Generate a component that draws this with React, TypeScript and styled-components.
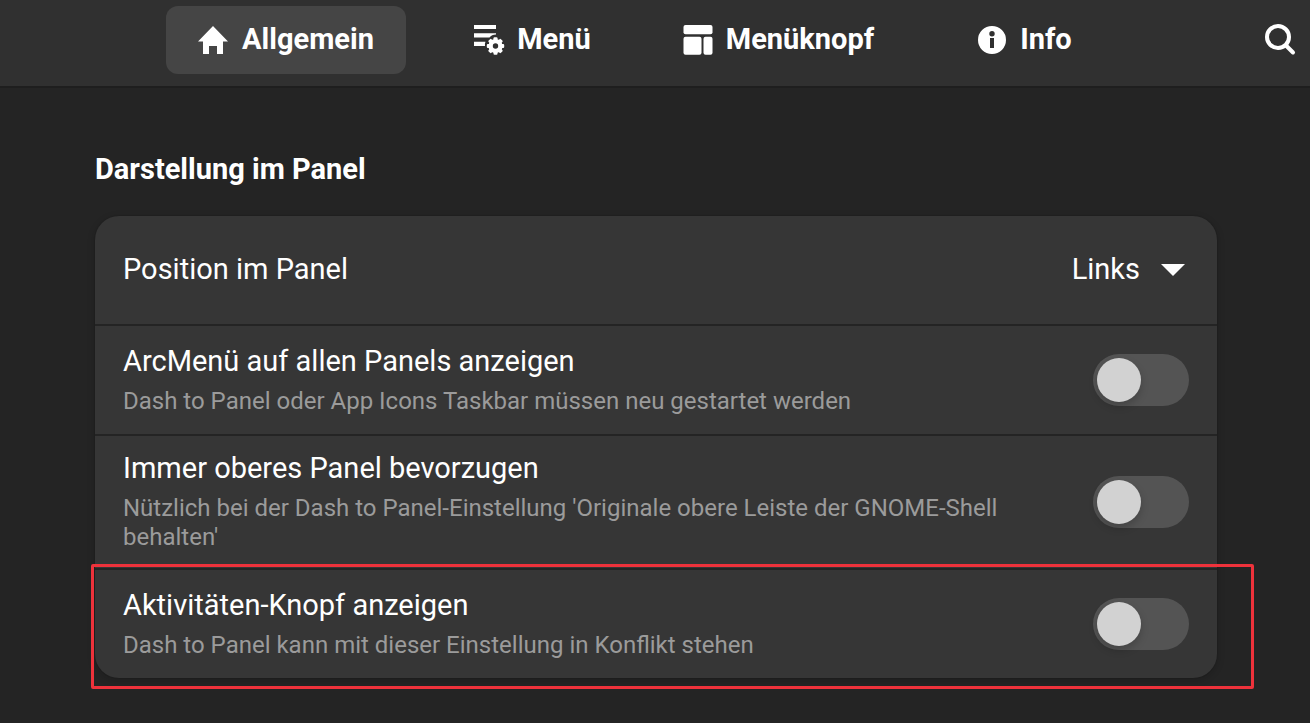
import React, { useId, useState } from "react";
import styled, { createGlobalStyle } from "styled-components";

const GlobalStyle = createGlobalStyle`
  *, *::before, *::after { box-sizing: border-box; }
  body {
    margin: 0;
    background: #242424;
    color: #ffffff;
    font-family: Roboto, "Liberation Sans", sans-serif;
    font-size: 29px;
    line-height: 36px;
  }
`;

const Header = styled.header`
  display: grid;
  grid-template-columns: 1fr minmax(0, auto) 1fr;
  padding: 6px 0 12px;
  background: #303030;
  border-bottom: 2px solid #1e1e1e;
`;

const Tabs = styled.nav`
  grid-column: 2;
  display: grid;
  grid-template-columns: repeat(4, minmax(0, 240px));
  gap: 6px;
`;

const Tab = styled.button<{ $active: boolean }>`
  display: flex;
  align-items: center;
  justify-content: center;
  gap: 12px;
  height: 68px;
  padding: 0 0 2px;
  border: 0;
  border-radius: 12px;
  background: ${(p) => (p.$active ? "#454545" : "transparent")};
  color: inherit;
  font: inherit;
  font-weight: 700;
  cursor: pointer;
`;

const TabIcon = styled.svg`
  flex: none;
  width: 32px;
  height: 32px;
  fill: currentColor;
`;

const SearchButton = styled.button`
  justify-self: end;
  display: flex;
  align-items: center;
  justify-content: center;
  padding: 0 14px;
  border: 0;
  background: transparent;
  color: inherit;
  cursor: pointer;
`;

const Main = styled.main`
  padding: 63px 93px 45px 95px;
`;

const GroupTitle = styled.h1`
  margin: 0 0 29px;
  font-size: 29px;
  line-height: 36px;
  font-weight: 700;
`;

const Card = styled.section`
  border-radius: 24px;
  background: #363636;
  box-shadow: 0 2px 6px 2px rgba(0, 0, 0, 0.12), 0 0 0 1px rgba(0, 0, 0, 0.06);
`;

const Row = styled.div<{ $marked?: boolean }>`
  position: relative;
  display: flex;
  align-items: center;
  gap: 28px;
  min-height: 108px;
  padding: 14px 28px;

  & + & {
    min-height: 110px;
    border-top: 2px solid #242424;
  }

  &::after {
    content: ${(p) => (p.$marked ? '""' : "none")};
    position: absolute;
    inset: -6px -37px -11px -4px;
    border: 3px solid #ee323b;
    border-radius: 2px;
    pointer-events: none;
  }
`;

const Texts = styled.div`
  flex: 1;
  min-width: 0;
  display: flex;
  flex-direction: column;
  gap: 8px;
  padding-bottom: 2px;
`;

const Title = styled.label``;

const Subtitle = styled.span`
  color: #9b9b9b;
  font-size: 24px;
  line-height: 29px;
`;

const SelectBox = styled.div`
  position: relative;
  padding-bottom: 2px;
`;

const Select = styled.select`
  appearance: none;
  display: block;
  padding: 0 49px 0 0;
  border: 0;
  background: transparent;
  color: inherit;
  font: inherit;
  text-align-last: right;
  cursor: pointer;

  option { background: #363636; }
`;

const Arrow = styled.svg`
  position: absolute;
  right: 4px;
  top: 13px;
  pointer-events: none;
`;

const Switch = styled.input`
  appearance: none;
  flex: none;
  display: flex;
  width: 96px;
  height: 52px;
  margin: 0;
  padding: 4px;
  border-radius: 26px;
  background: #545454;
  cursor: pointer;

  &::before {
    content: "";
    width: 44px;
    height: 44px;
    border-radius: 50%;
    background: #d2d2d2;
    box-shadow: 0 4px 8px rgba(0, 0, 0, 0.2);
  }

  &:checked {
    justify-content: flex-end;
    background: #3584e4;
  }
`;

const HomeIcon = () => (
  <TabIcon viewBox="0 0 32 32" aria-hidden="true">
    <path d="M15 3 30 18.500H25V31H19V23H11V31H5V18.500H0Z" />
  </TabIcon>
);

const GEAR_TEETH = [0, 45, 90, 135];

const MenuIcon = () => (
  <TabIcon viewBox="0 0 32 32" aria-hidden="true">
    <path d="M1 2h22v4H1zM1 10.300h22v1.200c-3 0-5 1-6.500 3H1zM1 18.700h11.500c-.6 1.400-.8 2.800-.5 4.300H1z" />
    <g transform="translate(22.500 23)">
      <circle r="4.900" fill="none" stroke="currentColor" strokeWidth="4.400" />
      {GEAR_TEETH.map((angle) => (
        <g key={angle} transform={`rotate(${angle})`}>
          <rect x="-2" y="-8.700" width="4" height="3.500" rx="1" />
          <rect x="-2" y="5.200" width="4" height="3.500" rx="1" />
        </g>
      ))}
    </g>
  </TabIcon>
);

const LayoutIcon = () => (
  <TabIcon viewBox="0 0 32 32" aria-hidden="true">
    <rect x="1.500" y="2" width="29" height="9.300" rx="2" />
    <rect x="1.500" y="13.700" width="18" height="18" rx="2" />
    <rect x="21.500" y="13.700" width="9" height="18" rx="2" />
  </TabIcon>
);

const InfoIcon = () => (
  <TabIcon viewBox="0 0 32 32" aria-hidden="true">
    <path
      fillRule="evenodd"
      d="M16 3a14 14 0 1 0 0 28a14 14 0 1 0 0-28zM16 8a2.700 2.700 0 1 1 0 5.400a2.700 2.700 0 1 1 0-5.400zM14 15h4v10h-4z"
    />
  </TabIcon>
);

const TABS = [
  { name: "Allgemein", Icon: HomeIcon },
  { name: "Menü", Icon: MenuIcon },
  { name: "Menüknopf", Icon: LayoutIcon },
  { name: "Info", Icon: InfoIcon },
];

const SWITCHES = [
  {
    title: "ArcMenü auf allen Panels anzeigen",
    subtitle: "Dash to Panel oder App Icons Taskbar müssen neu gestartet werden",
  },
  {
    title: "Immer oberes Panel bevorzugen",
    subtitle:
      "Nützlich bei der Dash to Panel-Einstellung 'Originale obere Leiste der GNOME-Shell behalten'",
  },
  {
    title: "Aktivitäten-Knopf anzeigen",
    subtitle: "Dash to Panel kann mit dieser Einstellung in Konflikt stehen",
    marked: true,
  },
];

function SwitchRow({ title, subtitle, marked }: { title: string; subtitle: string; marked?: boolean }) {
  const id = useId();
  return (
    <Row $marked={marked}>
      <Texts>
        <Title htmlFor={id}>{title}</Title>
        <Subtitle id={`${id}-hint`}>{subtitle}</Subtitle>
      </Texts>
      <Switch id={id} type="checkbox" role="switch" aria-describedby={`${id}-hint`} />
    </Row>
  );
}

export default function App() {
  const [tab, setTab] = useState("Allgemein");
  return (
    <>
      <GlobalStyle />
      <Header>
        <Tabs>
          {TABS.map(({ name, Icon }) => (
            <Tab key={name} type="button" $active={tab === name} onClick={() => setTab(name)}>
              <Icon />
              {name}
            </Tab>
          ))}
        </Tabs>
        <SearchButton type="button" aria-label="Suchen">
          <svg width="32" height="32" viewBox="0 0 32 32" fill="none" stroke="currentColor" strokeWidth="4" strokeLinecap="round" aria-hidden="true">
            <circle cx="14" cy="13" r="11" />
            <path d="M22 21.500 29 28.500" />
          </svg>
        </SearchButton>
      </Header>
      <Main>
        <GroupTitle>Darstellung im Panel</GroupTitle>
        <Card>
          <Row>
            <Texts>
              <Title htmlFor="position">Position im Panel</Title>
            </Texts>
            <SelectBox>
              <Select id="position" defaultValue="Links">
                <option>Links</option>
                <option>Mitte</option>
                <option>Rechts</option>
              </Select>
              <Arrow width="24" height="12" viewBox="0 0 24 12" fill="currentColor" aria-hidden="true">
                <path d="M0 0H24L12 12Z" />
              </Arrow>
            </SelectBox>
          </Row>
          {SWITCHES.map((item) => (
            <SwitchRow key={item.title} {...item} />
          ))}
        </Card>
      </Main>
    </>
  );
}
